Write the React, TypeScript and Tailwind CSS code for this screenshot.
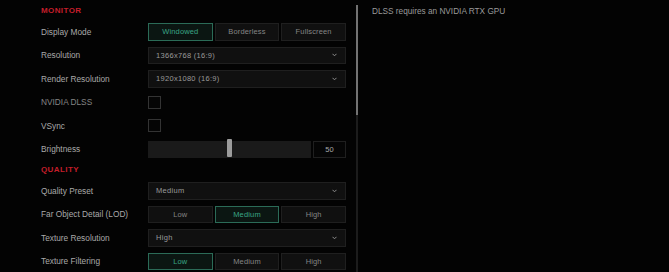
import React from "react";

type Row =
  | { kind: "header"; title: string }
  | { kind: "segment"; label: string; options: string[]; active: number }
  | { kind: "select"; label: string; value: string }
  | { kind: "check"; label: string; disabled?: boolean }
  | { kind: "slider"; label: string; value: number };

const ROWS: Row[] = [
  { kind: "header", title: "MONITOR" },
  { kind: "segment", label: "Display Mode", options: ["Windowed", "Borderless", "Fullscreen"], active: 0 },
  { kind: "select", label: "Resolution", value: "1366x768 (16:9)" },
  { kind: "select", label: "Render Resolution", value: "1920x1080 (16:9)" },
  { kind: "check", label: "NVIDIA DLSS", disabled: true },
  { kind: "check", label: "VSync" },
  { kind: "slider", label: "Brightness", value: 50 },
  { kind: "header", title: "QUALITY" },
  { kind: "select", label: "Quality Preset", value: "Medium" },
  { kind: "segment", label: "Far Object Detail (LOD)", options: ["Low", "Medium", "High"], active: 1 },
  { kind: "select", label: "Texture Resolution", value: "High" },
  { kind: "segment", label: "Texture Filtering", options: ["Low", "Medium", "High"], active: 0 },
];

function Chevron() {
  return (
    <svg width="5" height="4" viewBox="0 0 5 4" fill="none">
      <path d="M0.5 0.8 L2.5 2.8 L4.5 0.8" stroke="#8f8f8f" strokeWidth="1" />
    </svg>
  );
}

function Control({ row }: { row: Row }) {
  if (row.kind === "segment") {
    return (
      <div className="grid grid-cols-3 gap-[2px] w-[198px] h-full">
        {row.options.map((opt, i) => (
          <div
            key={opt}
            className={
              i === row.active
                ? "flex items-center justify-center border border-[#2b6b57] bg-[#0b1612] text-[#3aa585] text-[7.5px] tracking-[0.02em]"
                : "flex items-center justify-center border border-[#1f1f1f] bg-[#101010] text-[#858585] text-[7.5px] tracking-[0.02em]"
            }
          >
            {opt}
          </div>
        ))}
      </div>
    );
  }
  if (row.kind === "select") {
    return (
      <div className="flex items-center justify-between w-[198px] h-full border border-[#1f1f1f] bg-[#101010] pl-[7px] pr-[8px]">
        <span className="text-[7.5px] tracking-[0.04em] text-[#9a9a9a]">{row.value}</span>
        <Chevron />
      </div>
    );
  }
  if (row.kind === "check") {
    return <div className="w-[13px] h-[13px] border border-[#333] bg-[#050505]" />;
  }
  if (row.kind === "slider") {
    return (
      <div className="flex items-center gap-[2px] w-[198px] h-full">
        <div className="relative flex-1 h-full bg-[#1a1a1a]">
          <div className="absolute left-[79px] top-[-2px] w-[5px] h-[18px] rounded-[1px] bg-[#9c9c9c]" />
        </div>
        <div className="flex items-center justify-center w-[33px] h-full border border-[#1f1f1f] bg-[#050505] text-[7.5px] text-[#a8a8a8]">
          {row.value}
        </div>
      </div>
    );
  }
  return null;
}

export default function App() {
  return (
    <div className="w-[669px] h-[272px] bg-[#030303] flex overflow-hidden font-['Liberation_Sans',Arial,sans-serif]">
      {/* Settings list */}
      <div className="w-[356px] shrink-0 pl-[41px] pt-[5px] flex flex-col gap-[6px]">
        {ROWS.map((row, idx) =>
          row.kind === "header" ? (
            <div
              key={idx}
              className="h-[12px] shrink-0 flex items-center text-[8px] font-bold tracking-[0.05em] text-[#c41e2a]"
            >
              {row.title}
            </div>
          ) : (
            <div key={idx} className="h-[17.5px] shrink-0 flex items-center">
              <div
                className={
                  row.kind === "check" && row.disabled
                    ? "w-[107px] shrink-0 text-[8.3px] text-[#858585]"
                    : "w-[107px] shrink-0 text-[8.3px] text-[#a9a9a9]"
                }
              >
                {row.label}
              </div>
              <Control row={row} />
            </div>
          )
        )}
      </div>

      {/* Scrollbar */}
      <div className="w-[2px] shrink-0 pt-[5px] flex flex-col">
        <div className="h-[110px] bg-[#727272]" />
        <div className="flex-1 bg-[#1c1c1c]" />
      </div>

      {/* Info panel */}
      <div className="pl-[14px] pt-[6px] text-[8.25px] text-[#9a9a9a]">
        DLSS requires an NVIDIA RTX GPU
      </div>
    </div>
  );
}
